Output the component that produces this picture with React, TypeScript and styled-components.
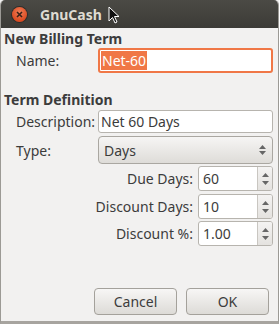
import React from 'react'
import styled, { createGlobalStyle } from 'styled-components'

const GlobalStyle = createGlobalStyle`
  html, body {
    margin: 0;
    padding: 0;
    background: #f2f1f0;
  }
  body {
    font-family: 'Noto Sans', 'DejaVu Sans', sans-serif;
    font-size: 14px;
    color: #3c3c3c;
  }
`

const Window = styled.div`
  width: 279px;
  height: 324px;
  box-sizing: border-box;
  display: flex;
  flex-direction: column;
  background: #f2f1f0;
  border-left: 1px solid #9c9a95;
  border-right: 1px solid #9c9a95;
  border-bottom: 3px solid #a7a49f;
  border-radius: 5px 5px 0 0;
  overflow: hidden;
`

const TitleBar = styled.div`
  height: 28px;
  flex: none;
  display: flex;
  align-items: center;
  padding-left: 11px;
  gap: 13px;
  background: linear-gradient(#4b4a45, #3c3b37);
  position: relative;
`

const CloseButton = styled.div`
  width: 15px;
  height: 15px;
  border-radius: 50%;
  background: radial-gradient(circle at 50% 35%, #f17e58, #dc4b21 70%);
  box-shadow: 0 0 0 1px #2f2e2b;
  display: flex;
  align-items: center;
  justify-content: center;
`

const Title = styled.span`
  font-weight: bold;
  font-size: 14px;
  color: #dfdbd2;
`

const Cursor = styled.svg`
  position: absolute;
  left: 107px;
  top: 6px;
`

const Body = styled.div`
  flex: 1;
  display: flex;
  flex-direction: column;
  padding: 2px 4px 0 3px;
`

const Heading = styled.div<{ $top?: number }>`
  font-weight: bold;
  height: 16px;
  line-height: 16px;
  margin-top: ${p => p.$top ?? 1}px;
`

const Row = styled.div<{ $top?: number }>`
  display: flex;
  align-items: center;
  margin-top: ${p => p.$top ?? 0}px;
`

const Label = styled.span`
  width: 82px;
  padding-left: 12px;
  flex: none;
`

const Entry = styled.div<{ $focus?: boolean; $h?: number }>`
  flex: 1;
  height: ${p => p.$h ?? 23}px;
  box-sizing: border-box;
  background: #fff;
  border: ${p => (p.$focus ? '2px solid #f07746' : '1px solid #b7b4ae')};
  border-radius: 3px;
  display: flex;
  align-items: center;
  padding-left: ${p => (p.$focus ? 1 : 2)}px;
  margin-right: 1px;
`

const Selected = styled.span`
  background: #f07746;
  color: #fff;
  line-height: 19px;
  padding: 0 1px;
`

const Combo = styled.div`
  flex: 1;
  height: 28px;
  box-sizing: border-box;
  border: 1px solid #aaa7a1;
  border-radius: 4px;
  background: linear-gradient(#f6f5f4, #dedcd8);
  display: flex;
  align-items: center;
  justify-content: space-between;
  padding: 0 6px 0 5px;
  margin-right: 1px;
`

const ComboArrows = styled.span`
  display: flex;
  flex-direction: column;
  gap: 2px;
`

const SpinRow = styled.div<{ $top?: number }>`
  display: flex;
  align-items: center;
  justify-content: flex-end;
  gap: 5px;
  margin-top: ${p => p.$top ?? 0}px;
  margin-right: 1px;
`

const SpinLabel = styled.span`
  text-align: right;
`

const Spin = styled.div`
  width: 75px;
  height: 25px;
  box-sizing: border-box;
  border: 1px solid #b7b4ae;
  border-radius: 3px;
  background: #fff;
  display: flex;
  overflow: hidden;
`

const SpinText = styled.span`
  flex: 1;
  padding-left: 4px;
  line-height: 23px;
`

const SpinButtons = styled.div`
  width: 14px;
  border-left: 1px solid #c9c6c1;
  background: linear-gradient(#f4f3f2, #e4e2df);
  display: flex;
  flex-direction: column;
  align-items: center;
  justify-content: center;
  gap: 4px;
`

const Footer = styled.div`
  margin-top: auto;
  display: flex;
  justify-content: flex-end;
  gap: 9px;
  padding: 0 5px 6px 0;
`

const Button = styled.div`
  width: 83px;
  height: 27px;
  box-sizing: border-box;
  border: 1px solid #a4a19b;
  border-radius: 4px;
  background: linear-gradient(#f7f6f5, #dddbd7);
  display: flex;
  align-items: center;
  justify-content: center;
`

const Arrow = ({ up }: { up?: boolean }) => (
  <svg width="7" height="4" viewBox="0 0 7 4">
    <path d={up ? 'M0 4 L3.5 0 L7 4 Z' : 'M0 0 L3.5 4 L7 0 Z'} fill="#666" />
  </svg>
)

const SpinField = ({ label, value, top }: { label: string; value: string; top?: number }) => (
  <SpinRow $top={top}>
    <SpinLabel>{label}</SpinLabel>
    <Spin>
      <SpinText>{value}</SpinText>
      <SpinButtons>
        <Arrow up />
        <Arrow />
      </SpinButtons>
    </Spin>
  </SpinRow>
)

export default function App() {
  return (
    <>
      <GlobalStyle />
      <Window>
        <TitleBar>
          <CloseButton>
            <svg width="7" height="7" viewBox="0 0 7 7">
              <path d="M1 1 L6 6 M6 1 L1 6" stroke="#3a2218" strokeWidth="1.6" />
            </svg>
          </CloseButton>
          <Title>GnuCash</Title>
          <Cursor width="12" height="18" viewBox="0 0 12 18">
            <path d="M1 1 L1 15 L4.5 11.5 L7 17 L9 16 L6.5 10.5 L11 10.5 Z" fill="#111" stroke="#fff" strokeWidth="1" />
          </Cursor>
        </TitleBar>
        <Body>
          <Heading>New Billing Term</Heading>
          <Row $top={1}>
            <Label>Name:</Label>
            <Entry $focus $h={25}>
              <Selected>Net-60</Selected>
            </Entry>
          </Row>
          <Heading $top={19}>Term Definition</Heading>
          <Row $top={2}>
            <Label>Description:</Label>
            <Entry>Net 60 Days</Entry>
          </Row>
          <Row $top={3}>
            <Label>Type:</Label>
            <Combo>
              <span>Days</span>
              <ComboArrows>
                <Arrow up />
                <Arrow />
              </ComboArrows>
            </Combo>
          </Row>
          <SpinField label="Due Days:" value="60" top={2} />
          <SpinField label="Discount Days:" value="10" top={3} />
          <SpinField label="Discount %:" value="1.00" top={2} />
          <Footer>
            <Button>Cancel</Button>
            <Button>OK</Button>
          </Footer>
        </Body>
      </Window>
    </>
  )
}
